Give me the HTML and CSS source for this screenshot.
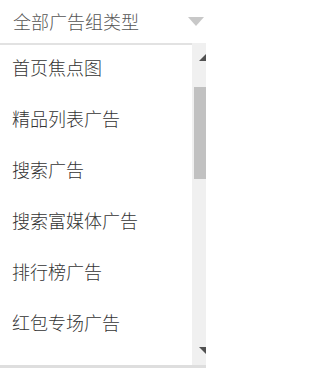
FILE: index.html
```html
<!DOCTYPE html>
<html lang="zh-CN">
<head>
<meta charset="utf-8">
<title>全部广告组类型</title>
<link rel="stylesheet" href="styles.css">
</head>
<body>
<div class="select">
  <div class="select-head">
    <span class="select-value">全部广告组类型</span>
    <span class="caret"></span>
  </div>
  <div class="panel">
    <ul class="options">
      <li class="option">首页焦点图</li>
      <li class="option">精品列表广告</li>
      <li class="option">搜索广告</li>
      <li class="option">搜索富媒体广告</li>
      <li class="option">排行榜广告</li>
      <li class="option">红包专场广告</li>
    </ul>
    <div class="scrollbar">
      <span class="arrow-up"></span>
      <span class="thumb"></span>
      <span class="spacer"></span>
      <span class="arrow-down"></span>
    </div>
  </div>
  <div class="bottom-bar"></div>
</div>
</body>
</html>
```
FILE: styles.css
```css
html, body {
  margin: 0;
  padding: 0;
  background: #ffffff;
}
body {
  width: 206px;
  height: 368px;
  overflow: hidden;
  font-family: "Noto Sans CJK SC", "Noto Sans", sans-serif;
  font-weight: 300;
}
.select {
  width: 206px;
  display: flex;
  flex-direction: column;
}
.select-head {
  height: 43px;
  display: flex;
  align-items: center;
  justify-content: space-between;
  padding-left: 13px;
  padding-right: 2px;
}
.select-value {
  font-size: 18px;
  line-height: 43px;
  color: #555555;
}
.caret {
  width: 0;
  height: 0;
  border-left: 8.5px solid transparent;
  border-right: 8.5px solid transparent;
  border-top: 9px solid #c8c8c8;
}
.panel {
  height: 322px;
  display: flex;
  overflow: hidden;
}
.options {
  list-style: none;
  margin: 0;
  padding: 0;
  flex: 0 0 192px;
  border-top: 2px solid #e2e2e2;
  overflow: hidden;
}
.option {
  font-size: 18px;
  line-height: 44px;
  padding-left: 12px;
  padding-bottom: 7px;
  color: #333333;
  white-space: nowrap;
}
.scrollbar {
  flex: 0 0 28px;
  background: #f0f0f0;
  display: flex;
  flex-direction: column;
  align-items: center;
  padding-top: 11px;
  padding-bottom: 11px;
}
.arrow-up {
  width: 0;
  height: 0;
  border-left: 7px solid transparent;
  border-right: 7px solid transparent;
  border-bottom: 7px solid #505050;
}
.thumb {
  margin-top: 26px;
  width: 24px;
  height: 92px;
  background: #c1c1c1;
}
.spacer {
  flex: 1;
}
.arrow-down {
  width: 0;
  height: 0;
  border-left: 7px solid transparent;
  border-right: 7px solid transparent;
  border-top: 7px solid #505050;
}
.bottom-bar {
  height: 3px;
  background: #dedede;
}
```
